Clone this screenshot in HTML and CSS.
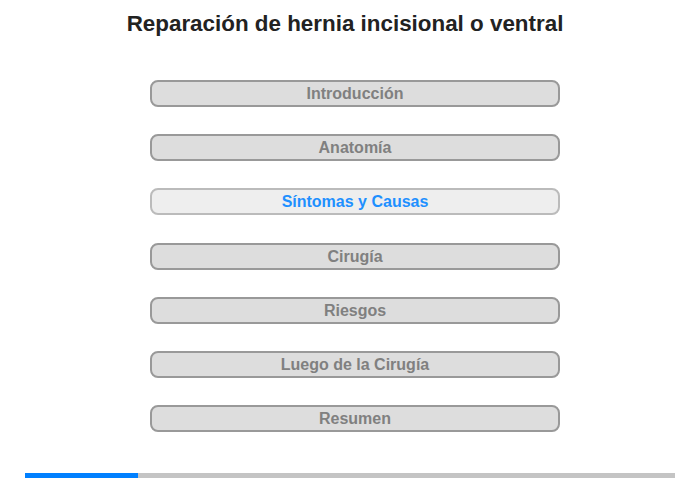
FILE: index.html
```html
<!DOCTYPE html>
<html lang="es">
<head>
<meta charset="utf-8">
<title>Reparación de hernia incisional o ventral</title>
<link rel="stylesheet" href="styles.css">
</head>
<body>
<div class="page">
  <h1 class="title">Reparación de hernia incisional o ventral</h1>
  <nav class="menu">
    <div class="item">Introducción</div>
    <div class="item">Anatomía</div>
    <div class="item active">Síntomas y Causas</div>
    <div class="item">Cirugía</div>
    <div class="item">Riesgos</div>
    <div class="item">Luego de la Cirugía</div>
    <div class="item">Resumen</div>
  </nav>
  <div class="progress"><div class="fill" style="width:113px"></div></div>
</div>
</body>
</html>
```
FILE: styles.css
```css
html, body {
  margin: 0;
  padding: 0;
  background: #fff;
}
.page {
  width: 700px;
  height: 480px;
  display: flex;
  flex-direction: column;
  font-family: "Liberation Sans", Arial, sans-serif;
}
.title {
  margin: 11px 0 0 0;
  padding-right: 10px;
  font-size: 22.4px;
  line-height: 26px;
  font-weight: bold;
  color: #222;
  text-align: center;
}
.menu {
  margin-top: 43px;
  padding-left: 150px;
  display: flex;
  flex-direction: column;
  gap: 27.2px;
}
.item {
  box-sizing: border-box;
  width: 410px;
  height: 27px;
  border: 2px solid #999;
  border-radius: 8px;
  background: #ddd;
  color: #808080;
  font-size: 16px;
  font-weight: bold;
  line-height: 23px;
  text-align: center;
}
.item.active {
  background: #eee;
  border-color: #bbb;
  color: #1e90ff;
}
.progress {
  margin: auto 25px 2px 25px;
  height: 5px;
  background: #c4c4c4;
}
.fill {
  height: 100%;
  background: #0080ff;
}
```
